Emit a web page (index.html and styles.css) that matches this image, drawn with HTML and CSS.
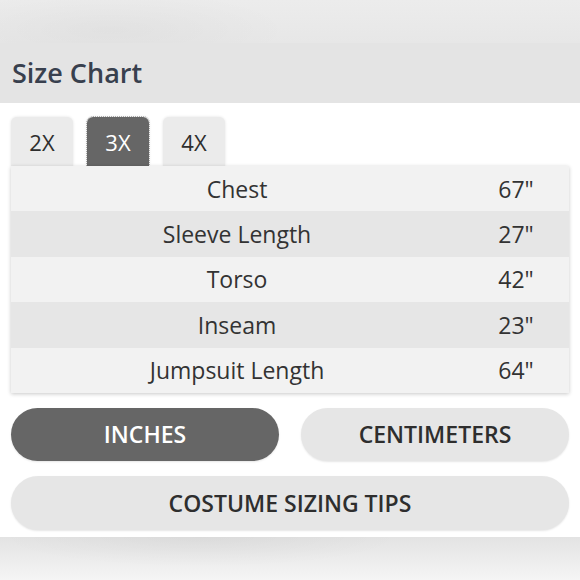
FILE: index.html
```html
<!DOCTYPE html>
<html>
<head>
<meta charset="utf-8">
<link rel="stylesheet" href="styles.css">
</head>
<body>
<div class="top-band"></div>
<div class="header">Size Chart</div>
<div class="main">
  <div class="tabs">
    <div class="tab">2X</div>
    <div class="tab active">3X</div>
    <div class="tab">4X</div>
  </div>
  <div class="table">
    <div class="row"><div class="label">Chest</div><div class="value">67"</div></div>
    <div class="row"><div class="label">Sleeve Length</div><div class="value">27"</div></div>
    <div class="row"><div class="label">Torso</div><div class="value">42"</div></div>
    <div class="row"><div class="label">Inseam</div><div class="value">23"</div></div>
    <div class="row"><div class="label">Jumpsuit Length</div><div class="value">64"</div></div>
  </div>
  <div class="units">
    <div class="pill dark">INCHES</div>
    <div class="pill">CENTIMETERS</div>
  </div>
  <div class="pill tips">COSTUME SIZING TIPS</div>
</div>
<div class="bottom-band"></div>
</body>
</html>
```
FILE: styles.css
```css
html, body {
  margin: 0;
  padding: 0;
  width: 580px;
  height: 580px;
  overflow: hidden;
  background: #fff;
  font-family: "Open Sans", "Lato", sans-serif;
}
.top-band {
  height: 43px;
  background:
    radial-gradient(ellipse 180px 40px at 110px 30px, rgba(0,0,0,0.03), rgba(0,0,0,0) 100%),
    linear-gradient(180deg, #ececec 0%, #e7e7e7 100%);
}
.header {
  height: 60px;
  box-sizing: border-box;
  background: #e4e4e4;
  padding-left: 12px;
  padding-bottom: 2px;
  display: flex;
  align-items: center;
  font-size: 27px;
  font-weight: 600;
  color: #38404e;
}
.main {
  padding: 14px 11px 7px 11px;
  background: #fff;
}
.tabs {
  display: flex;
  gap: 14px;
  height: 49px;
}
.tab {
  width: 62px;
  background: #ebebeb;
  border-radius: 6px 6px 0 0;
  display: flex;
  align-items: center;
  justify-content: center;
  font-size: 22px;
  color: #2e2e2e;
  box-shadow: 0 0 3px rgba(0,0,0,0.12);
}
.tab.active {
  background: #666;
  color: #fff;
  outline: 1px dotted #aaa;
}
.table {
  box-shadow: 0 1px 4px rgba(0,0,0,0.22);
  position: relative;
}
.row {
  display: flex;
  height: 45.4px;
  align-items: center;
  background: #f2f2f2;
  font-size: 23px;
  color: #333;
}
.row:nth-child(even) {
  background: #e6e6e6;
}
.label {
  width: 452px;
  text-align: center;
}
.value {
  flex: 1;
  text-align: center;
}
.units {
  display: flex;
  gap: 22px;
  margin-top: 15px;
}
.pill {
  flex: 1;
  height: 53px;
  border-radius: 27px;
  background: #e6e6e6;
  display: flex;
  align-items: center;
  justify-content: center;
  font-size: 23px;
  font-weight: 600;
  color: #2e2e2e;
  box-shadow: 0 1px 2px rgba(0,0,0,0.1);
}
.pill.dark {
  background: #666;
  color: #fff;
}
.tips {
  margin-top: 15px;
  height: 54px;
}
.bottom-band {
  height: 43px;
  background:
    radial-gradient(ellipse 200px 30px at 200px 0px, rgba(0,0,0,0.04), rgba(0,0,0,0) 100%),
    linear-gradient(180deg, #e3e3e3 0%, #f5f5f5 100%);
}
```
